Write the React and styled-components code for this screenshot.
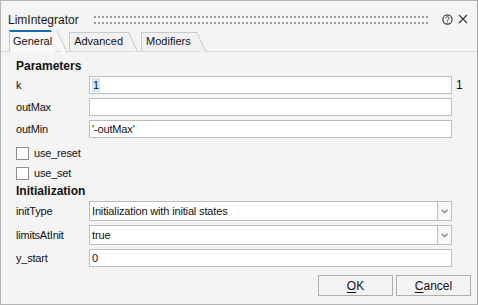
import React from 'react';
import styled, { createGlobalStyle } from 'styled-components';

const GlobalStyle = createGlobalStyle`
    html, body {
        margin: 0;
        padding: 0;
        background: #f4f4f4;
    }
    * {
        box-sizing: border-box;
    }
`;

const Window = styled.div`
    width: 478px;
    height: 305px;
    border: 1px solid #b4b4b4;
    border-right-color: #a8a8a8;
    background: #f4f4f4;
    display: flex;
    flex-direction: column;
    font-family: 'Liberation Sans', Arial, sans-serif;
    font-size: 11px;
    color: #111;
`;

const TitleBar = styled.div`
    display: flex;
    align-items: flex-start;
    height: 29px;
    padding: 12px 0 0 7px;
`;

const Title = styled.span`
    font-size: 12px;
    line-height: 14px;
    color: #1a1a1a;
`;

const Grip = styled.div`
    flex: 1;
    height: 8px;
    margin: 3px 11px 0 15px;
    background-image: radial-gradient(circle at 1px 1px, #9c9c9c 0.9px, transparent 1.3px);
    background-size: 4px 6px;
`;

const IconButton = styled.span`
    display: flex;
    align-items: center;
    justify-content: center;
    width: 12px;
    height: 12px;
    margin: 0 ${(props) => props.gap || 0}px 0 0;
`;

const TabStrip = styled.div`
    display: flex;
    align-items: flex-end;
    height: 22px;
    padding-left: 8px;
    border-bottom: 1px solid #dadada;
`;

const Tab = styled.div`
    position: relative;
    height: ${(props) => (props.active ? 22 : 19)}px;
    margin: 0 14px ${(props) => (props.active ? -1 : 0)}px 0;
    padding: 0 ${(props) => (props.active ? 3 : 4)}px 0 ${(props) => (props.active ? 3 : 4)}px;
    border-left: 1px solid #c9c9c9;
    border-top: ${(props) => (props.active ? '2px solid #1b6fa5' : '1px solid #c9c9c9')};
    background: ${(props) => (props.active ? '#f9f9f9' : '#f1f1f1')};
    line-height: ${(props) => (props.active ? 18 : 17)}px;
    color: #111;
    z-index: ${(props) => (props.active ? 2 : 1)};

    &::after {
        content: '';
        position: absolute;
        top: ${(props) => (props.active ? -2 : -1)}px;
        left: calc(100% - 4px);
        width: 5px;
        height: calc(100% + ${(props) => (props.active ? 2 : 1)}px);
        border-top: 1px solid ${(props) => (props.active ? 'transparent' : '#c9c9c9')};
        border-right: 1px solid #c9c9c9;
        background: inherit;
        transform: skewX(25deg);
        transform-origin: top left;
    }
`;

const Body = styled.div`
    display: flex;
    flex-direction: column;
    padding: 0 0 0 15px;
`;

const SectionHead = styled.div`
    font-size: 12px;
    font-weight: bold;
    line-height: 14px;
    margin-top: ${(props) => props.top}px;
    color: #111;
`;

const Row = styled.div`
    display: grid;
    grid-template-columns: 73px 363px auto;
    align-items: center;
    height: ${(props) => (props.tall ? 20 : 18)}px;
    margin-top: ${(props) => props.top}px;
`;

const Label = styled.span`
    letter-spacing: -0.2px;
`;

const Field = styled.div`
    display: flex;
    align-items: center;
    height: 100%;
    padding-left: 2px;
    background: #fff;
    border: 1px solid #bdbdbd;
    letter-spacing: -0.15px;
`;

const Selected = styled.span`
    background: #cce8f6;
    padding: 1px 1px;
`;

const Combo = styled.div`
    display: grid;
    grid-template-columns: 1fr 15px;
    height: 100%;
`;

const ComboText = styled(Field)`
    border-right: none;
`;

const ComboButton = styled.div`
    display: flex;
    align-items: center;
    justify-content: center;
    background: #f7f7f7;
    border: 1px solid #bdbdbd;
`;

const Extra = styled.span`
    padding-left: 4px;
    font-size: 12px;
`;

const CheckRow = styled.label`
    display: flex;
    align-items: center;
    gap: 5px;
    height: 20px;
    margin-top: ${(props) => props.top}px;
`;

const Box = styled.span`
    width: 13px;
    height: 13px;
    background: #fff;
    border: 1px solid #8e8e8e;
`;

const Footer = styled.div`
    display: flex;
    justify-content: flex-end;
    gap: 3px;
    margin-top: 8px;
    padding-right: 6px;
`;

const Button = styled.div`
    width: 75px;
    height: 21px;
    display: flex;
    align-items: center;
    justify-content: center;
    background: #f4f4f4;
    border: 1px solid #aeaeae;
    font-size: 12px;
    color: #111;

    u {
        text-underline-offset: 2px;
    }
`;

const HelpIcon = () => (
    <svg width="11" height="11" viewBox="0 0 11 11">
        <circle cx="5.5" cy="5.5" r="4.6" fill="none" stroke="#333" strokeWidth="1.1" />
        <path d="M3.9 4.3 C3.9 3.2 4.7 2.8 5.5 2.8 C6.4 2.8 7.1 3.3 7.1 4.1 C7.1 5.1 5.6 5.2 5.6 6.4" fill="none" stroke="#333" strokeWidth="1" />
        <rect x="5.1" y="7.3" width="1" height="1" fill="#333" />
    </svg>
);

const CloseIcon = () => (
    <svg width="10" height="10" viewBox="0 0 10 10">
        <path d="M1 1 L9 9 M9 1 L1 9" stroke="#333" strokeWidth="1.1" />
    </svg>
);

const Arrow = () => (
    <svg width="7" height="5" viewBox="0 0 7 5">
        <path d="M0.5 0.8 L3.5 3.8 L6.5 0.8" fill="none" stroke="#8a8a8a" strokeWidth="1.4" />
    </svg>
);

const App = () => {
    const textRows = [
        { name: 'k', value: <Selected>1</Selected>, extra: '1', top: 3 },
        { name: 'outMax', value: '', top: 4 },
        { name: 'outMin', value: "'-outMax'", top: 4 },
    ];
    const comboRows = [
        { name: 'initType', value: 'Initialization with initial states', top: 3 },
        { name: 'limitsAtInit', value: 'true', top: 4 },
    ];

    return (
        <>
            <GlobalStyle />
            <Window>
                <TitleBar>
                    <Title>LimIntegrator</Title>
                    <Grip />
                    <IconButton gap={4}>
                        <HelpIcon />
                    </IconButton>
                    <IconButton gap={8}>
                        <CloseIcon />
                    </IconButton>
                </TitleBar>
                <TabStrip>
                    <Tab active>General</Tab>
                    <Tab>Advanced</Tab>
                    <Tab>Modifiers</Tab>
                </TabStrip>
                <Body>
                    <SectionHead top={7}>Parameters</SectionHead>
                    {textRows.map((row) => (
                        <Row key={row.name} top={row.top}>
                            <Label>{row.name}</Label>
                            <Field>{row.value}</Field>
                            {row.extra && <Extra>{row.extra}</Extra>}
                        </Row>
                    ))}
                    <CheckRow top={5}>
                        <Box />
                        <Label>use_reset</Label>
                    </CheckRow>
                    <CheckRow top={0}>
                        <Box />
                        <Label>use_set</Label>
                    </CheckRow>
                    <SectionHead top={1}>Initialization</SectionHead>
                    {comboRows.map((row) => (
                        <Row key={row.name} top={row.top} tall>
                            <Label>{row.name}</Label>
                            <Combo>
                                <ComboText>{row.value}</ComboText>
                                <ComboButton>
                                    <Arrow />
                                </ComboButton>
                            </Combo>
                        </Row>
                    ))}
                    <Row top={4}>
                        <Label>y_start</Label>
                        <Field>0</Field>
                    </Row>
                </Body>
                <Footer>
                    <Button>
                        <u>O</u>K
                    </Button>
                    <Button>
                        <u>C</u>ancel
                    </Button>
                </Footer>
            </Window>
        </>
    );
};

export default App;
